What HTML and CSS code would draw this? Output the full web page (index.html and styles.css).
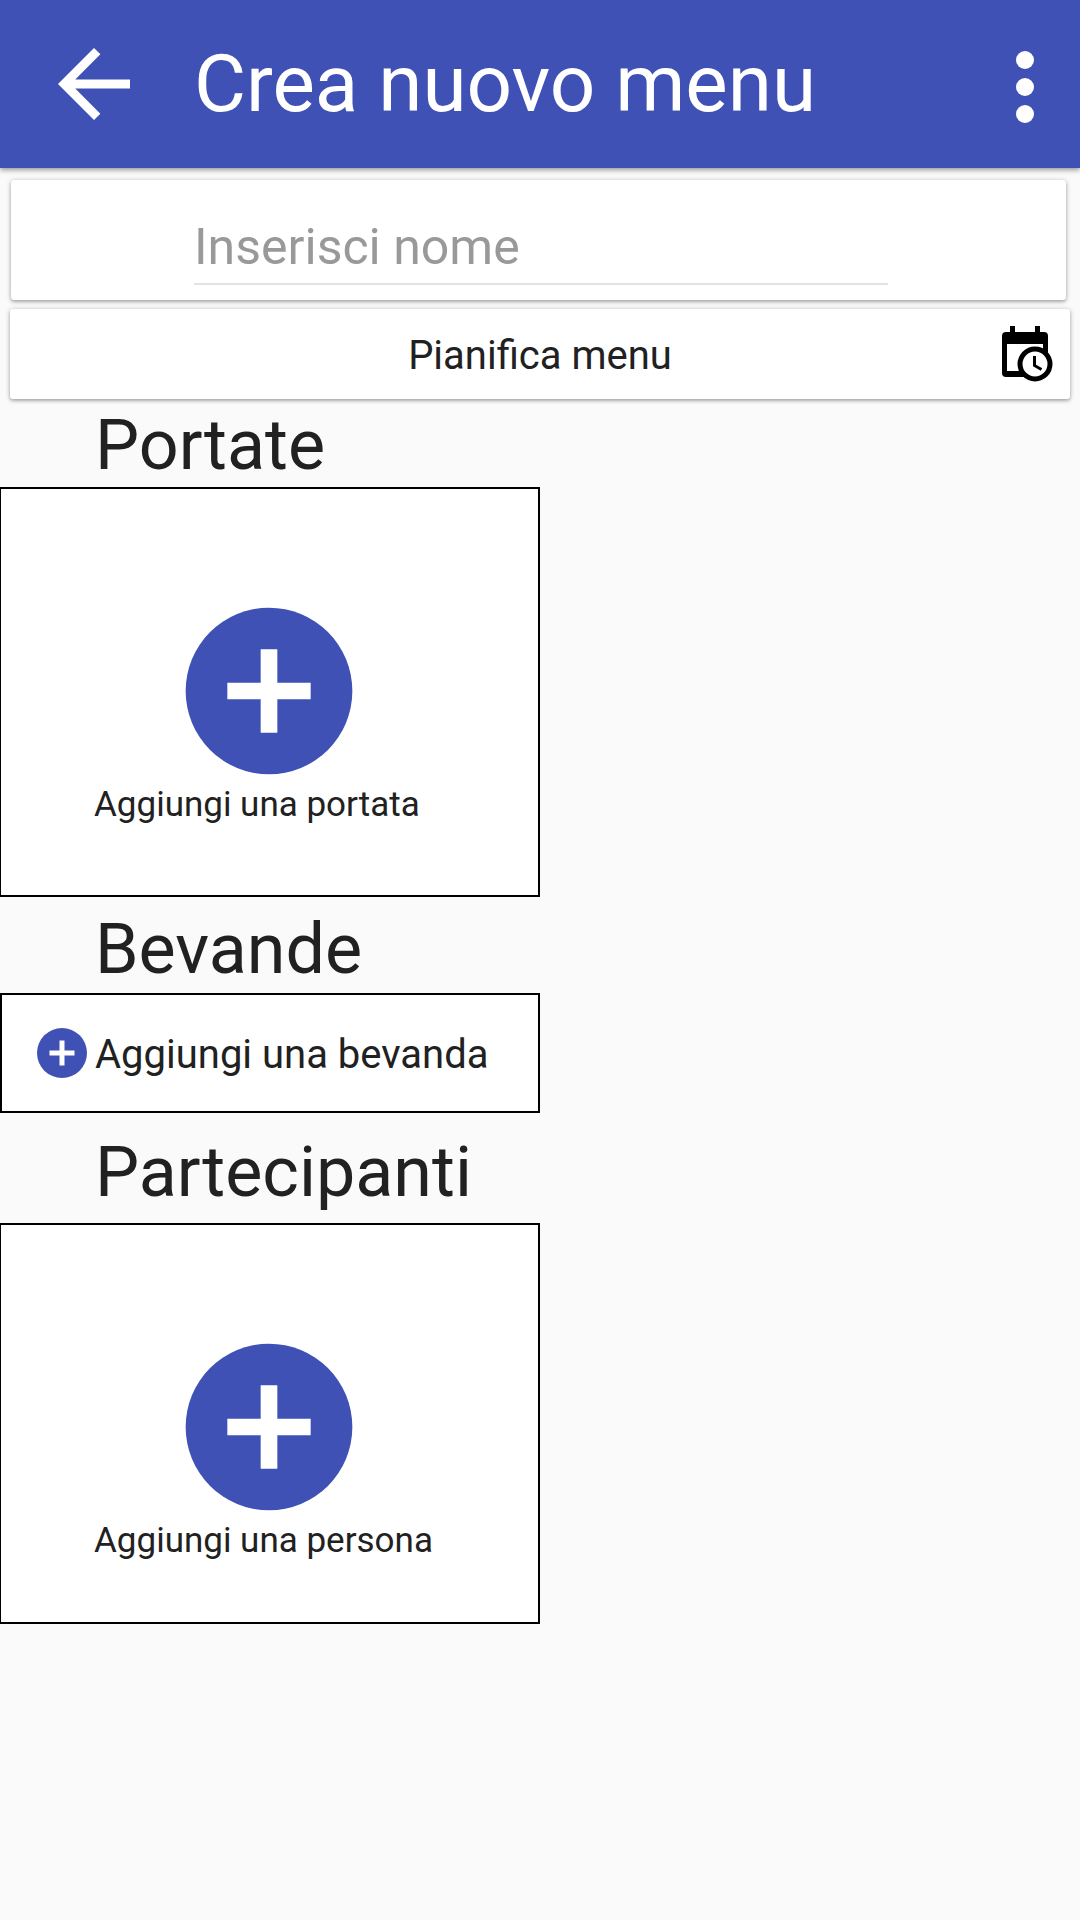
FILE: index.html
```html
<!DOCTYPE html>
<html lang="it">
<head>
  <meta charset="utf-8">
  <meta name="viewport" content="width=device-width, initial-scale=1">
  <title>Crea nuovo menu</title>
  <link rel="stylesheet" href="styles.css">
</head>
<body>
  <header class="toolbar">
    <button class="icon-button" type="button" aria-label="Indietro">
      <svg class="toolbar-icon" viewBox="0 0 24 24" aria-hidden="true"><path d="M20 11H7.83l5.59-5.59L12 4l-8 8 8 8 1.41-1.41L7.83 13H20v-2z"/></svg>
    </button>
    <h1 class="toolbar-title">Crea nuovo menu</h1>
    <button class="icon-button overflow" type="button" aria-label="Altre opzioni">
      <svg class="toolbar-icon" viewBox="0 0 24 24" aria-hidden="true"><circle cx="12" cy="6" r="2"/><circle cx="12" cy="12" r="2"/><circle cx="12" cy="18" r="2"/></svg>
    </button>
  </header>

  <main>
    <form class="card name-card">
      <input class="name-input" type="text" name="nome" placeholder="Inserisci nome" aria-label="Nome del menu">
    </form>

    <button class="card plan-card" type="button">
      <span class="plan-label">Pianifica menu</span>
      <svg class="plan-icon" viewBox="0 0 51 56" aria-hidden="true">
        <path fill-rule="evenodd" d="M8 0h5v6h20V0h5v6h4q4 0 4 4v37q0 4-4 4H4q-4 0-4-4V10q0-4 4-4h4zM5 18v27h36V18z"/>
        <circle class="clock-face" cx="33" cy="38" r="15"/>
        <path class="clock-hands" d="M32.500 30v9.500l7 4"/>
      </svg>
    </button>

    <section class="section courses">
      <h2 class="section-title">Portate</h2>
      <button class="tile" type="button">
        <svg class="tile-icon" viewBox="0 0 24 24" aria-hidden="true"><circle class="disc" cx="12" cy="12" r="10"/><path class="plus" d="M11 7h2v4h4v2h-4v4h-2v-4H7v-2h4z"/></svg>
        <span class="tile-label">Aggiungi una portata</span>
      </button>
    </section>

    <section class="section drinks">
      <h2 class="section-title">Bevande</h2>
      <button class="row-button" type="button">
        <svg class="row-icon" viewBox="0 0 24 24" aria-hidden="true"><circle class="disc" cx="12" cy="12" r="10"/><path class="plus" d="M11 7h2v4h4v2h-4v4h-2v-4H7v-2h4z"/></svg>
        <span class="row-label">Aggiungi una bevanda</span>
      </button>
    </section>

    <section class="section people">
      <h2 class="section-title">Partecipanti</h2>
      <button class="tile" type="button">
        <svg class="tile-icon" viewBox="0 0 24 24" aria-hidden="true"><circle class="disc" cx="12" cy="12" r="10"/><path class="plus" d="M11 7h2v4h4v2h-4v4h-2v-4H7v-2h4z"/></svg>
        <span class="tile-label">Aggiungi una persona</span>
      </button>
    </section>
  </main>
</body>
</html>
```
FILE: styles.css
```css
* {
  box-sizing: border-box;
}

body {
  margin: 0;
  min-height: 100vh;
  background: #fafafa;
  color: #212121;
  font-family: Roboto, "Liberation Sans", sans-serif;
}

button,
input {
  margin: 0;
  padding: 0;
  border: 0;
  background: none;
  color: inherit;
  font: inherit;
}

button {
  cursor: pointer;
}

svg {
  display: block;
  flex: none;
}

/* Toolbar */
.toolbar {
  display: flex;
  align-items: center;
  padding: 30px 1px 30px 40px;
  background: #3f51b5;
  color: #fff;
  box-shadow: 0 2px 5px rgba(0, 0, 0, 0.4);
}

.toolbar-icon {
  width: 108px;
  height: 108px;
  fill: currentColor;
}

.toolbar-title {
  flex: 1;
  margin: 0 0 0 46px;
  font-size: 80px;
  font-weight: 400;
  line-height: 96px;
}

.overflow {
  margin: 3px 0 -3px;
}

/* Cards */
.card {
  background: #fff;
  border-radius: 3px;
  box-shadow: 0 1px 5px rgba(0, 0, 0, 0.3), 0 2px 3px rgba(0, 0, 0, 0.14);
}

.name-card {
  display: flex;
  margin: 12px 14px 0 11px;
  padding: 37px 178px 15px 183px;
}

.name-input {
  flex: 1;
  min-width: 0;
  height: 68px;
  padding-bottom: 6px;
  border-bottom: 2px solid #e2e2e2;
  border-radius: 0;
  outline: 0;
  font-size: 50px;
  line-height: 60px;
}

.name-input::placeholder {
  color: #999;
  opacity: 1;
}

.plan-card {
  display: grid;
  grid-template-columns: 1fr auto 1fr;
  align-items: center;
  width: calc(100% - 20px);
  margin: 9px 10px 0;
  padding: 17px;
  font-size: 40px;
  line-height: 52px;
}

.plan-label {
  grid-column: 2;
  padding-top: 3px;
}

.plan-icon {
  justify-self: end;
  width: 51px;
  height: 56px;
}

.clock-face {
  fill: #fff;
  stroke: #000;
  stroke-width: 5;
}

.clock-hands {
  fill: none;
  stroke: #000;
  stroke-width: 3;
}

/* Sections */
.section-title {
  margin: 0 0 0 95px;
  font-size: 70px;
  font-weight: 400;
  line-height: 80px;
}

.courses {
  padding-top: 6px;
}

.drinks {
  padding-top: 12px;
}

.people {
  padding-top: 19px;
}

.tile,
.row-button {
  display: flex;
  width: 50%;
  background: #fff;
  border: 2px solid #000;
}

.tile {
  flex-direction: column;
  align-items: center;
  border-left-width: 1px;
  padding: 102px 1px 0 0;
}

.courses .tile {
  margin-top: 2px;
  padding-bottom: 76px;
}

.people .tile {
  margin-top: 11px;
  padding-bottom: 67px;
}

.tile-icon {
  width: 200px;
  height: 200px;
}

.tile-label {
  align-self: flex-start;
  margin-left: 93px;
  font-size: 35px;
  line-height: 28px;
}

.row-button {
  align-items: center;
  gap: 3px;
  margin-top: 4px;
  padding: 28px 30px;
  font-size: 40px;
  line-height: 52px;
}

.row-label {
  padding-top: 4px;
}

.row-icon {
  width: 60px;
  height: 60px;
}

.disc {
  fill: #3f51b5;
}

.plus {
  fill: #fff;
}
```
